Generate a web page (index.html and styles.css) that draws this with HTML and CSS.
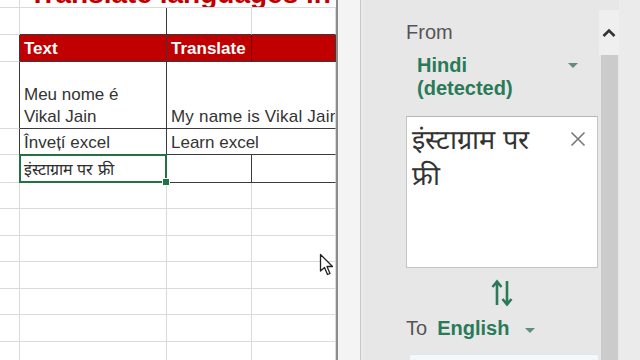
FILE: index.html
```html
<!DOCTYPE html>
<html>
<head>
<meta charset="utf-8">
<link rel="stylesheet" href="styles.css">
</head>
<body>
<div class="app">
  <div class="sheet">
    <!-- row 0: title -->
    <div class="c"></div>
    <div class="c title-cell span3"><div class="title">Translate languages in</div></div>
    <!-- row 1 -->
    <div class="c"></div>
    <div class="c tb-b tb-r"></div>
    <div class="c tb-b"></div>
    <div class="c tb-b"></div>
    <!-- row 2 header -->
    <div class="c tb-r"></div>
    <div class="c hd tb-b tb-r">Text</div>
    <div class="c hd hd-mid tb-b">Translate</div>
    <div class="c hd tb-b"></div>
    <!-- row 3 -->
    <div class="c tb-r"></div>
    <div class="c tx tb-b tb-r">Meu nome é<br>Vikal Jain</div>
    <div class="c tx tb-b span2 clip">My name is Vikal Jain</div>
    <!-- row 4 -->
    <div class="c tb-r"></div>
    <div class="c tx tb-b tb-r">Învețí excel</div>
    <div class="c tx tb-b span2">Learn excel</div>
    <!-- row 5 -->
    <div class="c tb-r"></div>
    <div class="c tx tb-b tb-r sel">इंस्टाग्राम पर फ्री</div>
    <div class="c tb-b tb-r"></div>
    <div class="c tb-b"></div>
    <!-- rows 6-12 -->
    <div class="c"></div><div class="c"></div><div class="c"></div><div class="c"></div>
    <div class="c"></div><div class="c"></div><div class="c"></div><div class="c"></div>
    <div class="c"></div><div class="c"></div><div class="c"></div><div class="c"></div>
    <div class="c"></div><div class="c"></div><div class="c"></div><div class="c"></div>
    <div class="c"></div><div class="c"></div><div class="c"></div><div class="c"></div>
    <div class="c"></div><div class="c"></div><div class="c"></div><div class="c"></div>
    <div class="c"></div><div class="c"></div><div class="c"></div><div class="c"></div>
    <svg class="cursor" width="16" height="24" viewBox="0 0 16 24">
      <path d="M1.5 1.5 L1.5 18 L5.5 14.5 L8.5 21.5 L11 20.5 L8 13.5 L13.5 13.5 Z" fill="#fff" stroke="#222" stroke-width="1.3" stroke-linejoin="round"/>
    </svg>
  </div>
  <div class="divider"><div class="div-strip"></div></div>
  <div class="pane">
    <div class="pane-body">
      <div class="label">From</div>
      <div class="lang-row">
        <div class="lang">Hindi<br>(detected)</div>
        <span class="caret"></span>
      </div>
      <div class="textbox">
        <div class="src">इंस्टाग्राम पर फ्री</div>
        <svg class="close" width="16" height="16" viewBox="0 0 16 16">
          <path d="M1.5 1.5 L14.5 14.5 M14.5 1.5 L1.5 14.5" stroke="#777" stroke-width="1.6" fill="none"/>
        </svg>
      </div>
      <div class="swap">
        <svg width="22" height="28" viewBox="0 0 22 28">
          <path d="M6 26 V3 M1.5 8 L6 2.5 L10.5 8" stroke="#2a7a58" stroke-width="2.6" fill="none" stroke-linejoin="miter"/>
          <path d="M16 2 V25 M11.5 20 L16 25.5 L20.5 20" stroke="#2a7a58" stroke-width="2.6" fill="none"/>
        </svg>
      </div>
      <div class="to-row">
        <span class="label">To</span>
        <span class="lang">English</span>
        <span class="caret"></span>
      </div>
      <div class="target"></div>
    </div>
    <div class="scroll">
      <div class="scroll-btn">
        <svg width="14" height="10" viewBox="0 0 14 10">
          <path d="M1.5 8 L7 2.5 L12.5 8" stroke="#333" stroke-width="2.6" fill="none"/>
        </svg>
      </div>
      <div class="thumb"></div>
    </div>
    <div class="pane-edge"></div>
  </div>
</div>
</body>
</html>
```
FILE: styles.css
```css
* { box-sizing: border-box; }
html, body { margin: 0; padding: 0; }
body {
  width: 640px;
  height: 360px;
  overflow: hidden;
  background: #fff;
  font-family: "Liberation Sans", Arial, sans-serif;
}
.app {
  display: flex;
  width: 640px;
  height: 360px;
}
.sheet {
  position: relative;
  width: 336px;
  height: 360px;
  overflow: hidden;
  display: grid;
  grid-template-columns: 20px 147px 85px 84px;
  grid-template-rows: 8px 27px 27px 67px 26px 28px 26px 27px 26px 27px 26px 27px 26px;
  background: #fff;
  flex: none;
}
.c {
  border-right: 1px solid #dadada;
  border-bottom: 1px solid #dadada;
  min-width: 0;
}
.span3 { grid-column: span 3; }
.span2 { grid-column: span 2; }
.tb-b { border-bottom: 1px solid #3a3a3a; }
.tb-r { border-right: 1px solid #3a3a3a; }
.title-cell {
  overflow: hidden;
  border-right: none;
  padding-left: 9px;
}
.title {
  margin-top: -20px;
  font-size: 28px;
  line-height: 28px;
  font-weight: bold;
  color: #c00000;
  white-space: nowrap;
}
.hd {
  background: #c00000;
  color: #fff;
  font-weight: bold;
  font-size: 17px;
  padding: 4px 0 0 4px;
  line-height: 20px;
  border-right-color: #3a3a3a;
}
.hd-mid { border-right: 1px solid #7a0000; }
.tx {
  display: flex;
  align-items: flex-end;
  padding: 0 0 0 4px;
  font-size: 17px;
  line-height: 22px;
  color: #333;
  white-space: nowrap;
}
.clip { overflow: hidden; letter-spacing: 0.2px; }
.sel {
  position: relative;
  font-size: 16px;
  color: #2e2e2e;
  padding-bottom: 1px;
}
.sel::after {
  content: "";
  position: absolute;
  left: -1px;
  top: -1px;
  right: -1px;
  bottom: -1px;
  border: 2px solid #217346;
}
.sel::before {
  content: "";
  position: absolute;
  right: -4px;
  bottom: -4px;
  width: 6px;
  height: 6px;
  background: #217346;
  border: 1px solid #fff;
  z-index: 2;
}
.cursor {
  position: absolute;
  left: 319px;
  top: 253px;
}
.divider {
  width: 29px;
  flex: none;
  border-left: 2px solid #8c8c8c;
  background: #f4f4f4;
  display: flex;
  justify-content: flex-end;
}
.div-strip {
  width: 5px;
  border-left: 1px solid #c9c9c9;
  background: #e9e9e9;
}
.pane {
  flex: 1;
  display: flex;
  background: #e7e7e7;
}
.pane-body {
  width: 233px;
  padding: 19px 0 0 41px;
  display: flex;
  flex-direction: column;
}
.pane-body > * { flex: none; }
.label {
  font-size: 20px;
  line-height: 26px;
  color: #555;
}
.lang-row {
  display: flex;
  align-items: flex-start;
  justify-content: space-between;
  padding: 9px 20px 0 11px;
  height: 71px;
}
.lang {
  font-size: 20px;
  line-height: 23px;
  font-weight: bold;
  color: #2a7a58;
}
.caret {
  width: 0;
  height: 0;
  border-left: 5px solid transparent;
  border-right: 5px solid transparent;
  border-top: 5px solid #5f8f7a;
  margin-top: 9px;
}
.textbox {
  height: 152px;
  background: #fff;
  border: 1px solid #c4c4c4;
  border-top-color: #b8b8b8;
  display: flex;
  justify-content: space-between;
  align-items: flex-start;
  padding: 5px 11px 0 5px;
}
.src {
  font-size: 27px;
  line-height: 36px;
  color: #333;
  width: 136px;
}
.close { margin-top: 9px; }
.swap {
  display: flex;
  justify-content: center;
  padding: 11px 0 0 0;
  height: 47px;
}
.to-row {
  display: flex;
  align-items: center;
  gap: 10px;
  height: 26px;
}
.to-row .caret { margin: 4px 0 0 6px; }
.target {
  margin-top: 13px;
  margin-left: 4px;
  height: 20px;
  background: #f5f8fb;
  border-top: 1px solid #dfe6ee;
}
.scroll {
  width: 20px;
  margin-left: 1px;
  padding-top: 10px;
  display: flex;
  flex-direction: column;
}
.scroll-btn {
  height: 45px;
  background: #efefef;
  display: flex;
  justify-content: center;
  align-items: center;
}
.thumb {
  flex: 1;
  margin: 0 1px 0 2px;
  background: #cbcbcb;
}
.pane-edge {
  flex: 1;
  background: #ebebeb;
}
```
